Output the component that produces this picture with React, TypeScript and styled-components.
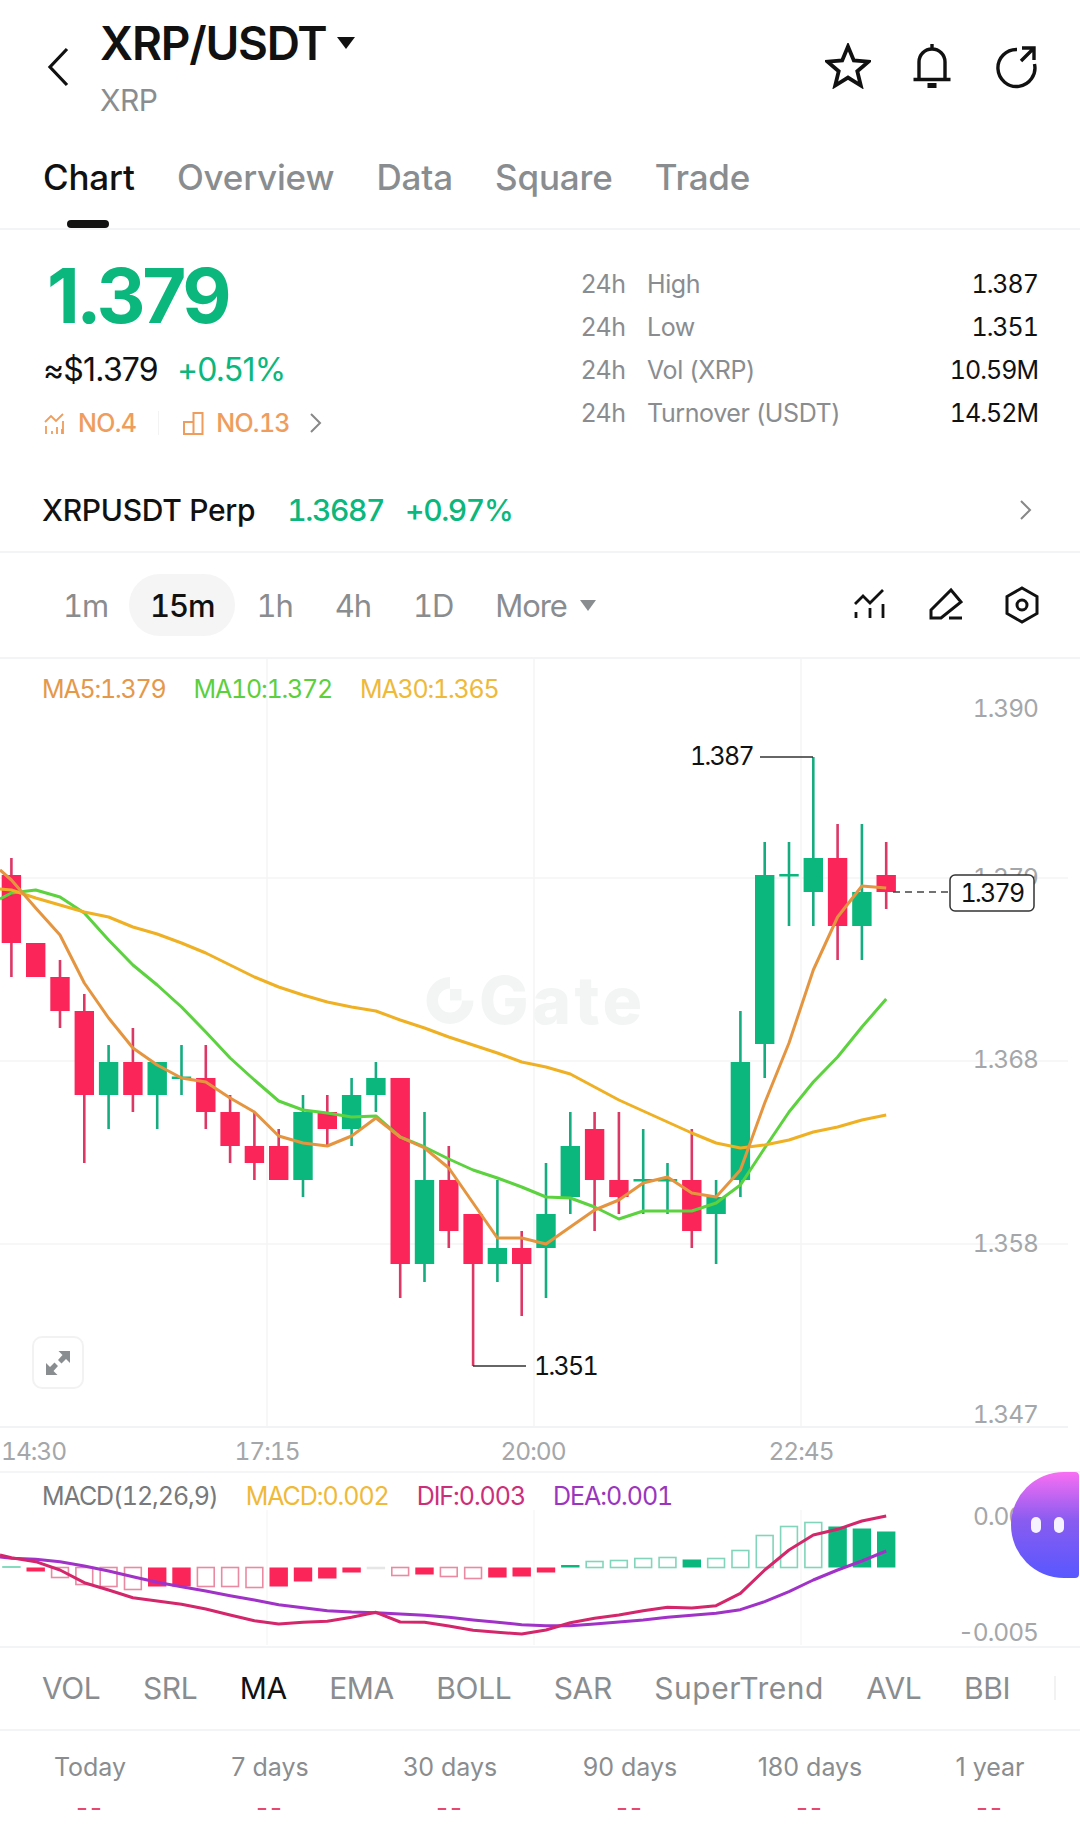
import styled, { createGlobalStyle } from 'styled-components'

const GlobalStyle = createGlobalStyle`
  html, body {
    margin: 0;
    padding: 0;
    background: #fff;
  }
  body {
    font-family: 'Inter', 'Liberation Sans', sans-serif;
    color: #111;
  }
`

const GREEN = '#0bb77c'
const RED = '#fb2559'
const GREY = '#8a8d90'

const Page = styled.div`
  position: relative;
  width: 1080px;
  height: 1838px;
  overflow: hidden;
  background: #fff;
`

const Header = styled.header`
  display: flex;
  align-items: flex-start;
  height: 130px;
  padding: 0 41px 0 47px;
  box-sizing: border-box;
`

const BackIcon = styled.svg`
  width: 22px;
  height: 40px;
  margin-top: 47px;
  margin-right: 31px;
`

const TitleBlock = styled.div`
  flex: 1;
  padding-top: 15px;
`

const TitleRow = styled.div`
  display: flex;
  align-items: flex-start;
  gap: 10px;
`

const Title = styled.h1`
  margin: 0;
  font-size: 46px;
  line-height: 56px;
  font-weight: 600;
  letter-spacing: -1.2px;
`

const Caret = styled.i<{ $size?: number; $color?: string }>`
  display: block;
  width: 0;
  height: 0;
  border-left: ${(p) => p.$size ?? 9}px solid transparent;
  border-right: ${(p) => p.$size ?? 9}px solid transparent;
  border-top: ${(p) => (p.$size ?? 9) + 3}px solid ${(p) => p.$color ?? '#111'};
`

const CaretSlot = styled.span`
  padding-top: 22px;
`

const SubTitle = styled.div`
  font-size: 30px;
  line-height: 36px;
  color: ${GREY};
  letter-spacing: -0.5px;
  margin-top: 11px;
`

const HeaderActions = styled.div`
  display: flex;
  gap: 38px;
  padding-top: 43px;
`

const ActionIcon = styled.svg`
  width: 46px;
  height: 46px;
`

const Tabs = styled.nav`
  position: relative;
  display: flex;
  gap: 42.3px;
  height: 100px;
  padding: 25px 0 0 43px;
  box-sizing: border-box;
  border-bottom: 2px solid #f3f4f5;
`

const Tab = styled.span<{ $active?: boolean }>`
  font-size: 35px;
  line-height: 44px;
  font-weight: 500;
  letter-spacing: -0.2px;
  color: ${(p) => (p.$active ? '#111' : GREY)};
`

const TabMarker = styled.i`
  position: absolute;
  left: 67px;
  bottom: 0;
  width: 42px;
  height: 8px;
  border-radius: 4px;
  background: #111;
`

const Stats = styled.section`
  display: flex;
  justify-content: space-between;
  height: 240px;
  padding: 0 42px 0 43px;
  box-sizing: border-box;
`

const StatsLeft = styled.div`
  padding-top: 27px;
`

const BigPrice = styled.div`
  font-size: 76px;
  line-height: 76px;
  font-weight: 700;
  letter-spacing: -3.4px;
  color: ${GREEN};
  margin-left: 4px;
`

const PriceRow = styled.div`
  display: flex;
  gap: 19px;
  margin-top: 17px;
  font-size: 32px;
  line-height: 40px;
  letter-spacing: -0.8px;
`

const Change = styled.span`
  color: ${GREEN};
`

const RankRow = styled.div`
  display: flex;
  align-items: center;
  margin-top: 17px;
  font-size: 25px;
  line-height: 32px;
  font-weight: 500;
  letter-spacing: -0.7px;
  font-variant-numeric: tabular-nums;
  color: #ef9d5c;
`

const RankIcon = styled.svg`
  width: 24px;
  height: 24px;
  margin-right: 11px;
`

const RankDivider = styled.i`
  width: 1px;
  height: 24px;
  background: #f3f3f3;
  margin: 0 22px;
`

const RankChevron = styled.svg`
  width: 14px;
  height: 22px;
  margin-left: 19px;
`

const StatsRight = styled.dl`
  width: 457px;
  margin: 33px 0 0;
`

const StatRow = styled.div`
  display: flex;
  height: 43px;
  font-size: 25px;
  line-height: 43px;
  letter-spacing: -0.4px;
`

const StatPeriod = styled.dt`
  width: 66px;
  color: ${GREY};
`

const StatLabel = styled.span`
  flex: 1;
  color: ${GREY};
`

const StatValue = styled.dd`
  margin: 0;
  color: #111;
  font-variant-numeric: tabular-nums;
  letter-spacing: -1px;
`

const PerpRow = styled.div`
  display: flex;
  align-items: center;
  height: 83px;
  padding: 0 47px 1px 42px;
  box-sizing: border-box;
  font-size: 30px;
  font-weight: 500;
  letter-spacing: -0.3px;
  border-bottom: 2px solid #f3f4f5;
`

const PerpName = styled.span`
  margin-right: 32px;
`

const PerpValue = styled.span`
  color: ${GREEN};
  margin-right: 21px;
  font-variant-numeric: tabular-nums;
  letter-spacing: -1.4px;
`

const PerpChevron = styled.svg`
  width: 14px;
  height: 22px;
  margin-left: auto;
`

const IntervalBar = styled.div`
  display: flex;
  align-items: center;
  height: 106px;
  padding: 0 41px 0 42px;
  box-sizing: border-box;
  font-size: 31px;
  border-bottom: 2px solid #f3f4f5;
`

const Interval = styled.span<{ $active?: boolean }>`
  display: flex;
  align-items: center;
  justify-content: center;
  height: 62px;
  padding: 0 21px;
  border-radius: 31px;
  background: ${(p) => (p.$active ? '#f5f5f5' : 'transparent')};
  color: ${(p) => (p.$active ? '#111' : GREY)};
  font-weight: ${(p) => (p.$active ? 500 : 400)};
  font-variant-numeric: tabular-nums;
  letter-spacing: -1.1px;
`

const MoreCaret = styled.span`
  margin-left: 13px;
`

const ToolIcons = styled.div`
  display: flex;
  gap: 42px;
  margin-left: auto;
`

const ToolIcon = styled.svg`
  width: 34px;
  height: 38px;
`

const ChartPanel = styled.div`
  position: relative;
  height: 987px;
`

const ChartSvg = styled.svg`
  display: block;
  width: 1080px;
  height: 987px;
`

const Legend = styled.div<{ $top: number; $spacing: number }>`
  position: absolute;
  left: 42px;
  top: ${(p) => p.$top}px;
  display: flex;
  gap: 28px;
  font-size: 25px;
  line-height: 30px;
  font-variant-numeric: tabular-nums;
  letter-spacing: ${(p) => p.$spacing}px;
`

const LegendItem = styled.span<{ $color: string }>`
  color: ${(p) => p.$color};
`

const AxisText = styled.text`
  font-family: 'Inter', 'Liberation Sans', sans-serif;
  font-size: 24.5px;
  font-variant-numeric: tabular-nums;
  letter-spacing: -1px;
  fill: #a4a7aa;
`

const MarkText = styled.text`
  font-family: 'Inter', 'Liberation Sans', sans-serif;
  font-size: 25px;
  font-variant-numeric: tabular-nums;
  letter-spacing: -1.7px;
  fill: #111;
`

const Watermark = styled.text`
  font-family: 'Inter', 'Liberation Sans', sans-serif;
  font-size: 66px;
  font-weight: 800;
  letter-spacing: 3.5px;
  fill: #f3f5f5;
`

const ExpandButton = styled.div`
  position: absolute;
  left: 32px;
  top: 677px;
  display: flex;
  align-items: center;
  justify-content: center;
  width: 52px;
  height: 53px;
  box-sizing: border-box;
  background: #fff;
  border: 2px solid #f2f2f2;
  border-radius: 10px;
`

const Indicators = styled.div`
  display: flex;
  align-items: center;
  height: 85px;
  padding: 0 24px 2px 42px;
  box-sizing: border-box;
  font-size: 30px;
  letter-spacing: -0.4px;
  border-top: 2px solid #f3f4f5;
  border-bottom: 2px solid #f3f4f5;
`

const Indicator = styled.span<{ $active?: boolean; $wide?: boolean }>`
  margin-right: 42.5px;
  color: ${(p) => (p.$active ? '#111' : GREY)};
  ${(p) => (p.$wide ? 'letter-spacing: 0.5px;' : '')}
`

const IndicatorEdge = styled.i`
  width: 2px;
  height: 24px;
  margin-left: auto;
  background: #f2f2f2;
`

const Returns = styled.div`
  display: grid;
  grid-template-columns: repeat(6, 180px);
  padding-top: 18px;
`

const ReturnCell = styled.div`
  text-align: center;
`

const ReturnLabel = styled.div`
  font-size: 25px;
  line-height: 36px;
  color: ${GREY};
`

const ReturnValue = styled.div`
  font-size: 26px;
  line-height: 32px;
  margin-top: 7px;
  letter-spacing: 2px;
  color: #e6486f;
`

const ChatBubble = styled.div`
  position: absolute;
  left: 1011px;
  top: 1472px;
  width: 68px;
  height: 106px;
  display: flex;
  align-items: center;
  justify-content: flex-start;
  gap: 13px;
  padding-left: 20px;
  box-sizing: border-box;
  border-radius: 53px 4px 4px 53px;
  background: linear-gradient(180deg, #f86ff3 0%, #8a5cf0 45%, #5857ff 100%);
`

const BubbleEye = styled.i`
  width: 10px;
  height: 16px;
  border-radius: 5px;
  background: #f6f2ff;
`

type Candle = [number, number, number, number, 'u' | 'd']

// bodyTop, bodyBottom, wickTop, wickBottom, direction
const candles: Candle[] = [
  [875, 943, 858, 977, 'd'],
  [943, 977, 943, 977, 'd'],
  [977, 1011, 960, 1028, 'd'],
  [1011, 1095, 994, 1163, 'd'],
  [1062, 1095, 1045, 1129, 'u'],
  [1062, 1095, 1028, 1112, 'd'],
  [1062, 1095, 1062, 1129, 'u'],
  [1076.5, 1079, 1045, 1095, 'u'],
  [1078, 1112, 1045, 1129, 'd'],
  [1112, 1146, 1095, 1163, 'd'],
  [1146, 1163, 1112, 1180, 'd'],
  [1146, 1180, 1129, 1180, 'd'],
  [1112, 1180, 1095, 1197, 'u'],
  [1112, 1129, 1095, 1146, 'd'],
  [1095, 1129, 1078, 1146, 'u'],
  [1078, 1095, 1062, 1112, 'u'],
  [1078, 1264, 1078, 1298, 'd'],
  [1180, 1264, 1112, 1282, 'u'],
  [1180, 1231, 1146, 1248, 'd'],
  [1214, 1264, 1214, 1366, 'd'],
  [1248, 1264, 1180, 1282, 'u'],
  [1248, 1264, 1231, 1316, 'd'],
  [1214, 1248, 1163, 1298, 'u'],
  [1146, 1197, 1112, 1214, 'u'],
  [1129, 1180, 1112, 1231, 'd'],
  [1180, 1197, 1112, 1214, 'd'],
  [1179, 1181.5, 1129, 1214, 'u'],
  [1179, 1181.5, 1163, 1214, 'u'],
  [1180, 1231, 1129, 1248, 'd'],
  [1197, 1214, 1180, 1264, 'u'],
  [1062, 1180, 1011, 1197, 'u'],
  [875, 1044, 842, 1078, 'u'],
  [874, 876.5, 842, 926, 'u'],
  [858, 892, 757, 926, 'u'],
  [858, 926, 824, 960, 'd'],
  [892, 926, 824, 960, 'u'],
  [875, 892, 842, 909, 'd'],
]

const ma5 = [880, 908, 935, 983, 1018, 1048, 1065, 1078, 1082, 1098, 1112, 1136, 1143, 1146, 1136, 1118, 1137, 1148, 1168, 1203, 1238, 1238, 1244, 1227, 1210, 1200, 1183, 1177, 1193, 1197, 1170, 1103, 1043, 970, 917, 886, 888]
const ma10 = [893, 890, 897, 913, 940, 965, 985, 1007, 1032, 1058, 1080, 1101, 1110, 1113, 1117, 1116, 1137, 1147, 1159, 1170, 1178, 1187, 1197, 1198, 1207, 1219, 1211, 1211, 1211, 1203, 1185, 1148, 1112, 1082, 1057, 1027, 999]
const ma30 = [890, 898, 905, 912, 917, 927, 934, 943, 953, 965, 977, 987, 995, 1002, 1007, 1011, 1020, 1028, 1037, 1045, 1053, 1062, 1067, 1074, 1087, 1100, 1111, 1122, 1133, 1143, 1148, 1145, 1140, 1132, 1127, 1120, 1115]

const dif = [1557.7, 1561.7, 1570, 1582.7, 1590, 1597.7, 1601, 1604.3, 1609, 1615, 1620.7, 1624, 1622.3, 1621.3, 1617.3, 1612.3, 1622, 1622.3, 1626, 1630.3, 1632.3, 1634, 1630, 1622.7, 1618.3, 1615, 1610.7, 1607.3, 1608, 1605.7, 1593.3, 1570, 1550, 1535, 1529.3, 1521, 1516]
const dea = [1558.3, 1559.3, 1561.7, 1566, 1571, 1576.7, 1582.3, 1586.7, 1591, 1595.7, 1600, 1604.7, 1607.7, 1610.7, 1612, 1612.7, 1614, 1615.3, 1617.3, 1620, 1622.3, 1624.7, 1625.7, 1625.7, 1624, 1622, 1620, 1617.3, 1615.3, 1613.3, 1609.7, 1601.7, 1591.7, 1580, 1570, 1561, 1551]

// signed height from the zero line, positive goes up; hollow bars are outlines
const macdBars: [number, boolean][] = [
  [1, true], [-4, true], [-10, false], [-17, false], [-19, false], [-22, false], [-19, true], [-19, true], [-19, false],
  [-19, false], [-20, false], [-19, true], [-14, true], [-11, true], [-5, true], [-1, false], [-8, false], [-7, true],
  [-9, false], [-11, false], [-10, true], [-9, true], [-5, true], [2.5, true], [6, false], [7, false], [9, false],
  [10, false], [8, true], [9, false], [17, false], [32, false], [41, false], [45, false], [41, true], [39, true], [36, true],
]

const candleX = (i: number) => 11.4 + i * 24.3
const linePoints = (ys: number[], startY: number) =>
  `0,${startY} ` + ys.map((y, i) => `${candleX(i)},${y}`).join(' ')

const MACD_ZERO = 1567.5

const PriceChart = () => (
  <ChartSvg viewBox="0 659 1080 987">
    {[267, 534, 801].map((x) => (
      <line key={x} x1={x} x2={x} y1={659} y2={1427} stroke="#f5f5f5" strokeWidth={1.5} />
    ))}
    {[267, 534, 801].map((x) => (
      <line key={x} x1={x} x2={x} y1={1510} y2={1645} stroke="#f7f7f7" strokeWidth={1.5} />
    ))}
    {[878, 1061, 1244].map((y) => (
      <line key={y} x1={0} x2={1068} y1={y} y2={y} stroke="#f4f4f5" strokeWidth={1.5} />
    ))}
    <line x1={0} x2={1068} y1={1427} y2={1427} stroke="#f2f3f4" strokeWidth={2} />
    <line x1={0} x2={1080} y1={1472} y2={1472} stroke="#f4f5f6" strokeWidth={2} />

    <g fill="#f3f5f5">
      <path
        fillRule="evenodd"
        d="M450 977a23.500 23.500 0 1 0 23.500 23.500h-11.500a12 12 0 1 1-12-12z"
      />
      <rect x="450" y="989" width="11.500" height="11.500" />
    </g>
    <Watermark x={479} y={1024}>Gate</Watermark>

    <AxisText x={1038} y={717} textAnchor="end">1.390</AxisText>
    <AxisText x={1038} y={886} textAnchor="end">1.379</AxisText>
    <AxisText x={1038} y={1068} textAnchor="end">1.368</AxisText>
    <AxisText x={1038} y={1252} textAnchor="end">1.358</AxisText>
    <AxisText x={1038} y={1423} textAnchor="end">1.347</AxisText>

    <AxisText x={1} y={1460}>14:30</AxisText>
    <AxisText x={267} y={1460} textAnchor="middle">17:15</AxisText>
    <AxisText x={533} y={1460} textAnchor="middle">20:00</AxisText>
    <AxisText x={801} y={1460} textAnchor="middle">22:45</AxisText>

    {candles.map(([top, bottom, wickTop, wickBottom, dir], i) => {
      const x = candleX(i)
      return (
        <g key={i}>
          <line x1={x} x2={x} y1={wickTop} y2={wickBottom} stroke={dir === 'u' ? '#15ac80' : '#dc3765'} strokeWidth={2.6} />
          <rect x={x - 9.7} y={top} width={19.4} height={bottom - top} fill={dir === 'u' ? GREEN : RED} />
        </g>
      )
    })}

    <polyline points={linePoints(ma10, 899)} fill="none" stroke="#5bd23e" strokeWidth={3} strokeLinejoin="round" />
    <polyline points={linePoints(ma30, 889)} fill="none" stroke="#efb023" strokeWidth={3} strokeLinejoin="round" />
    <polyline points={linePoints(ma5, 870)} fill="none" stroke="#e5953f" strokeWidth={3} strokeLinejoin="round" />

    <line x1={760} x2={813} y1={757} y2={757} stroke="#333" strokeWidth={1.5} />
    <MarkText x={690} y={765}>1.387</MarkText>
    <line x1={473} x2={526} y1={1366} y2={1366} stroke="#333" strokeWidth={1.5} />
    <MarkText x={534} y={1375}>1.351</MarkText>

    <line x1={893} x2={950} y1={892} y2={892} stroke="#444" strokeWidth={1.5} strokeDasharray="7 5" />
    <rect x={950} y={875} width={84} height={36} rx={5} fill="#fff" stroke="#333" strokeWidth={1.5} />
    <MarkText x={992} y={902} textAnchor="middle">1.379</MarkText>

    {macdBars.map(([h, filled], i) => {
      const x = candleX(i) - 9.2
      const y = h > 0 ? MACD_ZERO - h : MACD_ZERO
      const up = h > 0
      const stroke = i === 15 ? '#e6e6e6' : up ? '#82d5ba' : '#ea8aa2'
      return filled ? (
        <rect key={i} x={x} y={y} width={18.4} height={Math.abs(h)} fill={up ? GREEN : RED} />
      ) : (
        <rect key={i} x={x + 0.8} y={y} width={16.8} height={Math.abs(h)} fill="#fff" stroke={stroke} strokeWidth={1.6} />
      )
    })}

    <polyline points={linePoints(dea, 1557)} fill="none" stroke="#a032c8" strokeWidth={3} strokeLinejoin="round" />
    <polyline points={linePoints(dif, 1555)} fill="none" stroke="#d4266a" strokeWidth={3} strokeLinejoin="round" />

    <AxisText x={973} y={1525}>0.005</AxisText>
    <AxisText x={1038} y={1641} textAnchor="end">-0.005</AxisText>
  </ChartSvg>
)

const rankBars = 'M9 20v3M14 16v7M19 18v5'

export default function App() {
  return (
    <Page>
      <GlobalStyle />
      <Header>
        <BackIcon viewBox="0 0 22 40">
          <path d="M20 2 3 20l17 18" fill="none" stroke="#111" strokeWidth={3.2} />
        </BackIcon>
        <TitleBlock>
          <TitleRow>
            <Title>XRP/USDT</Title>
            <CaretSlot>
              <Caret />
            </CaretSlot>
          </TitleRow>
          <SubTitle>XRP</SubTitle>
        </TitleBlock>
        <HeaderActions>
          <ActionIcon viewBox="0 0 46 46">
            <path
              d="M23 3.500 28.800 17.500 43.500 18.700 32.300 28.200 35.800 42.500 23 34.600 10.200 42.500 13.700 28.200 2.500 18.700 17.200 17.500Z"
              fill="none"
              stroke="#111"
              strokeWidth={3.8}
              strokeLinejoin="miter"
            />
          </ActionIcon>
          <ActionIcon viewBox="0 0 46 46">
            <path
              d="M23 1v5M10 35V19a13 13 0 0 1 26 0v16M4.500 36.500h37"
              fill="none"
              stroke="#111"
              strokeWidth={3.4}
            />
            <rect x="18.500" y="40" width="9" height="5" fill="#111" />
          </ActionIcon>
          <ActionIcon viewBox="0 0 46 46">
            <path
              d="M24 6.500A18.500 18.500 0 1 0 41.500 21M40 6 28 18M29 5h12v12"
              fill="none"
              stroke="#111"
              strokeWidth={3.4}
            />
          </ActionIcon>
        </HeaderActions>
      </Header>

      <Tabs>
        <Tab $active>Chart</Tab>
        <Tab>Overview</Tab>
        <Tab>Data</Tab>
        <Tab>Square</Tab>
        <Tab>Trade</Tab>
        <TabMarker />
      </Tabs>

      <Stats>
        <StatsLeft>
          <BigPrice>1.379</BigPrice>
          <PriceRow>
            <span>≈$1.379</span>
            <Change>+0.51%</Change>
          </PriceRow>
          <RankRow>
            <RankIcon viewBox="0 0 24 24">
              <path
                d="M2 11 8 5l5 5 7-7M3 15v8M20 10v13"
                fill="none"
                stroke="#ef9d5c"
                strokeWidth={1.8}
              />
              <path d={rankBars} fill="none" stroke="#ef9d5c" strokeWidth={1.8} />
            </RankIcon>
            NO.4
            <RankDivider />
            <RankIcon viewBox="0 0 24 24">
              <path
                d="M12.500 2h9v21h-9zM3 11h9.500v12H3z"
                fill="none"
                stroke="#ef9d5c"
                strokeWidth={2}
              />
            </RankIcon>
            NO.13
            <RankChevron viewBox="0 0 14 22">
              <path d="M2 2l9 9-9 9" fill="none" stroke="#888" strokeWidth={2} />
            </RankChevron>
          </RankRow>
        </StatsLeft>
        <StatsRight>
          <StatRow>
            <StatPeriod>24h</StatPeriod>
            <StatLabel>High</StatLabel>
            <StatValue>1.387</StatValue>
          </StatRow>
          <StatRow>
            <StatPeriod>24h</StatPeriod>
            <StatLabel>Low</StatLabel>
            <StatValue>1.351</StatValue>
          </StatRow>
          <StatRow>
            <StatPeriod>24h</StatPeriod>
            <StatLabel>Vol (XRP)</StatLabel>
            <StatValue>10.59M</StatValue>
          </StatRow>
          <StatRow>
            <StatPeriod>24h</StatPeriod>
            <StatLabel>Turnover (USDT)</StatLabel>
            <StatValue>14.52M</StatValue>
          </StatRow>
        </StatsRight>
      </Stats>

      <PerpRow>
        <PerpName>XRPUSDT Perp</PerpName>
        <PerpValue>1.3687</PerpValue>
        <PerpValue>+0.97%</PerpValue>
        <PerpChevron viewBox="0 0 14 22">
          <path d="M2 2l9 9-9 9" fill="none" stroke="#888" strokeWidth={2} />
        </PerpChevron>
      </PerpRow>

      <IntervalBar>
        <Interval>1m</Interval>
        <Interval $active>15m</Interval>
        <Interval>1h</Interval>
        <Interval>4h</Interval>
        <Interval>1D</Interval>
        <Interval>
          More
          <MoreCaret>
            <Caret $size={8.5} $color={GREY} />
          </MoreCaret>
        </Interval>
        <ToolIcons>
          <ToolIcon viewBox="0 0 34 38">
            <path
              d="M2 18 10 10l7 7L30 4M3 26v6M17 22v10M30 18v14"
              fill="none"
              stroke="#111"
              strokeWidth={2.8}
            />
          </ToolIcon>
          <ToolIcon viewBox="0 0 34 38">
            <path
              d="M2 24 22 4 32 16 12 32H2ZM20 32h13"
              fill="none"
              stroke="#111"
              strokeWidth={3}
            />
          </ToolIcon>
          <ToolIcon viewBox="0 0 34 38">
            <path d="M17 2 32 10.500v17L17 36 2 27.500v-17Z" fill="none" stroke="#111" strokeWidth={3} />
            <circle cx="17" cy="19" r="5" fill="none" stroke="#111" strokeWidth={3} />
          </ToolIcon>
        </ToolIcons>
      </IntervalBar>

      <ChartPanel>
        <PriceChart />
        <Legend $top={15} $spacing={-1.2}>
          <LegendItem $color="#e5984a">MA5:1.379</LegendItem>
          <LegendItem $color="#5bd03f">MA10:1.372</LegendItem>
          <LegendItem $color="#efb93a">MA30:1.365</LegendItem>
        </Legend>
        <ExpandButton>
          <svg width="26" height="26" viewBox="0 0 26 26">
            <path d="M25 1v12l-4-4-4.500 4.500-3.500-3.500L17.500 5 13.500 1ZM1 25V13l4 4 4.500-4.500 3.500 3.500L8.500 21l4 4Z" fill="#8a8d90" />
          </svg>
        </ExpandButton>
        <Legend $top={822} $spacing={-1.05}>
          <LegendItem $color="#77797c">MACD(12,26,9)</LegendItem>
          <LegendItem $color="#efb93a">MACD:0.002</LegendItem>
          <LegendItem $color="#cc2f7a">DIF:0.003</LegendItem>
          <LegendItem $color="#9b35bd">DEA:0.001</LegendItem>
        </Legend>
      </ChartPanel>

      <Indicators>
        <Indicator>VOL</Indicator>
        <Indicator>SRL</Indicator>
        <Indicator $active>MA</Indicator>
        <Indicator>EMA</Indicator>
        <Indicator>BOLL</Indicator>
        <Indicator>SAR</Indicator>
        <Indicator $wide>SuperTrend</Indicator>
        <Indicator>AVL</Indicator>
        <Indicator>BBI</Indicator>
        <IndicatorEdge />
      </Indicators>

      <Returns>
        {['Today', '7 days', '30 days', '90 days', '180 days', '1 year'].map((label) => (
          <ReturnCell key={label}>
            <ReturnLabel>{label}</ReturnLabel>
            <ReturnValue>--</ReturnValue>
          </ReturnCell>
        ))}
      </Returns>

      <ChatBubble>
        <BubbleEye />
        <BubbleEye />
      </ChatBubble>
    </Page>
  )
}
